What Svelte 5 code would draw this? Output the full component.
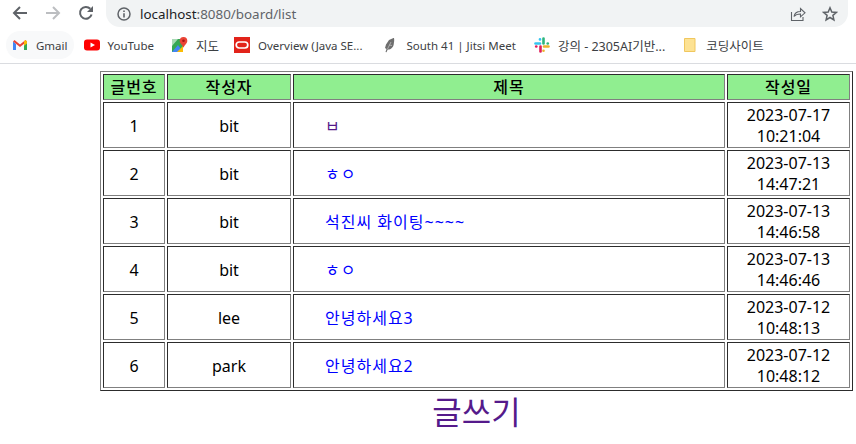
<script>
  const bookmarks = [
    { name: "Gmail", icon: "gmail", gap: 4 },
    { name: "YouTube", icon: "youtube", gap: 6 },
    { name: "지도", icon: "maps", ko: true, gap: 3 },
    { name: "Overview (Java SE...", icon: "oracle", gap: 8 },
    { name: "South 41 | Jitsi Meet", icon: "jitsi", gap: 6 },
    { name: "강의 - 2305AI기반...", icon: "slack", ko: true, gap: 5 },
    { name: "코딩사이트", icon: "folder", ko: true, gap: 0 }
  ];

  const rows = [
    { no: 1, writer: "bit", title: "ㅂ", day: "2023-07-17", time: "10:21:04", visited: true },
    { no: 2, writer: "bit", title: "ㅎㅇ", day: "2023-07-13", time: "14:47:21", visited: false },
    { no: 3, writer: "bit", title: "석진씨 화이팅~~~~", day: "2023-07-13", time: "14:46:58", visited: false },
    { no: 4, writer: "bit", title: "ㅎㅇ", day: "2023-07-13", time: "14:46:46", visited: false },
    { no: 5, writer: "lee", title: "안녕하세요3", day: "2023-07-12", time: "10:48:13", visited: false },
    { no: 6, writer: "park", title: "안녕하세요2", day: "2023-07-12", time: "10:48:12", visited: false }
  ];
</script>

<header class="chrome">
  <div class="toolbar">
    <div class="nav">
      <svg width="16" height="16" viewBox="0 0 16 16"><path d="M15 8H2.500M8 2 2 8l6 6" fill="none" stroke="#5f6368" stroke-width="2"/></svg>
      <svg width="16" height="16" viewBox="0 0 16 16"><path d="M1 8h12.500M8 2l6 6-6 6" fill="none" stroke="#bcbec1" stroke-width="2"/></svg>
      <svg width="16" height="16" viewBox="0 0 16 16"><path d="M13.600 9.500A5.900 5.900 0 1 1 12.300 3.800" fill="none" stroke="#5f6368" stroke-width="2"/><path d="M15 1v6H9z" fill="#5f6368"/></svg>
    </div>
    <div class="omnibox">
      <svg class="info" width="14" height="14" viewBox="0 0 14 14"><circle cx="7" cy="7" r="6" fill="none" stroke="#5f6368" stroke-width="1.500"/><path d="M6.200 3.400h1.600V5H6.200zM6.200 6.200h1.600v4.400H6.200z" fill="#5f6368"/></svg>
      <span class="url"><b>localhost</b>:8080/board/list</span>
      <svg class="share" width="16" height="16" viewBox="0 0 16 16"><path d="M1.500 6v8.500h11.500V11M4 10.500c.6-3.300 3-5 6.500-5V2.500L15 6.800l-4.500 4V8c-2.800 0-5 .6-6.500 2.500z" fill="none" stroke="#5f6368" stroke-width="1.100"/></svg>
      <svg class="star" width="16" height="16" viewBox="0 0 16 16"><path d="m8 1.800 1.800 4.200 4.600.4-3.500 3 1 4.500L8 11.500l-3.900 2.400 1-4.500-3.500-3 4.600-.4z" fill="none" stroke="#5f6368" stroke-width="1.500"/></svg>
    </div>
  </div>
  <nav class="bookmarks">
    {#each bookmarks as b}
      <div class="bookmark" class:hover={b.icon === "gmail"} class:ko={b.ko} style="margin-right: {b.gap}px">
        <svg width="16" height="16" viewBox="0 0 16 16">
          {#if b.icon === "gmail"}
            <path d="M1 4.500v8.500h3V7z" fill="#4285f4"/><path d="M12 7v6h3V4.500z" fill="#34a853"/><path d="M1 4.500 2.500 3 8 7.500 13.500 3 15 4.500 8 10z" fill="#ea4335"/><path d="M12 4.200 13.500 3 15 4.500V6.500L12 8.700z" fill="#fbbc04"/>
          {:else if b.icon === "youtube"}
            <rect y="2.500" width="16" height="11" rx="3" fill="#f00"/><path d="m6.500 5.500 4.500 2.500-4.500 2.500z" fill="#fff"/>
          {:else if b.icon === "maps"}
            <path d="M0 2h11v13H0z" fill="#34a853"/><path d="M0 15 6 8l5 7z" fill="#4285f4"/><path d="M5 15 11 9v6z" fill="#fbbc04"/><path d="M0 2h6L0 9z" fill="#a8dab5"/><path d="M11.500 0a3.800 3.800 0 0 1 3.800 3.800c0 2.500-2.300 3.700-3.800 7-1.500-3.300-3.800-4.500-3.800-7A3.800 3.800 0 0 1 11.500 0z" fill="#ea4335"/><circle cx="11.500" cy="3.800" r="1.300" fill="#a31515"/>
          {:else if b.icon === "oracle"}
            <rect width="16" height="16" fill="#e2231a"/><rect x="2.200" y="5" width="11.600" height="6" rx="3" fill="none" stroke="#fff" stroke-width="1.700"/>
          {:else if b.icon === "jitsi"}
            <path d="M11.500 1 7 3 4 7.500 3 11l1.500 1-1 3 1 .3 1.200-2.800c3 .2 5.500-2 6-5 .3-2.500.8-4 .3-6.500z" fill="#6e6e6e"/><path d="M5.500 12 9 5M7 8l3 .5" stroke="#bbb" stroke-width=".8"/>
          {:else if b.icon === "slack"}
            <path d="M1.500 6.500H6" stroke="#36c5f0" stroke-width="2.600" stroke-linecap="round"/><path d="M6 2.200v.3" stroke="#36c5f0" stroke-width="2.600" stroke-linecap="round"/><path d="M9.500 1.500V6.500" stroke="#2eb67d" stroke-width="2.600" stroke-linecap="round"/><path d="M13.700 6.500h.1" stroke="#2eb67d" stroke-width="2.600" stroke-linecap="round"/><path d="M10 9.500h4.500" stroke="#ecb22e" stroke-width="2.600" stroke-linecap="round"/><path d="M9.500 13.700v.1" stroke="#ecb22e" stroke-width="2.600" stroke-linecap="round"/><path d="M6.500 9.500v5" stroke="#e01e5a" stroke-width="2.600" stroke-linecap="round"/><path d="M2.200 9.500h.1" stroke="#e01e5a" stroke-width="2.600" stroke-linecap="round"/>
          {:else}
            <path d="M2.500 1.500h10.500v13H2.500z" fill="#fde293" stroke="#f0c75e"/>
          {/if}
        </svg>
        <span>{b.name}</span>
      </div>
    {/each}
  </nav>
</header>

<main>
  <table border="1">
    <thead>
      <tr>
        <th class="no">글번호</th>
        <th class="writer">작성자</th>
        <th class="title">제목</th>
        <th class="date">작성일</th>
      </tr>
    </thead>
    <tbody>
      {#each rows as r}
        <tr>
          <td>{r.no}</td>
          <td>{r.writer}</td>
          <td class="subject"><a href="#{r.no}" class:visited={r.visited}>{r.title}</a></td>
          <td>{r.day}<br />{r.time}</td>
        </tr>
      {/each}
    </tbody>
  </table>
  <a class="write" href="#write">글쓰기</a>
</main>

<style>
  :global(body) {
    background: #fff;
    font-family: "Noto Sans", "Noto Sans CJK KR", sans-serif;
  }

  .chrome {
    height: 63px;
    border-bottom: 1px solid #dadce0;
  }

  .toolbar {
    display: flex;
    height: 31px;
    align-items: flex-start;
  }

  .nav {
    display: flex;
    width: 106px;
    box-sizing: border-box;
    gap: 17px;
    padding: 5px 0 0 12px;
  }

  .omnibox {
    display: flex;
    align-items: center;
    width: 742px;
    height: 27px;
    border-radius: 0 0 14px 14px;
    background: #f1f3f4;
    padding-left: 11px;
    box-sizing: border-box;
  }

  .info {
    margin-right: 9px;
  }

  .url {
    flex: 1;
    font-size: 13.400px;
    color: #5f6368;
  }

  .url b {
    font-weight: 400;
    color: #202124;
  }

  .share {
    margin-right: 16px;
  }

  .star {
    margin-right: 10px;
  }

  .bookmarks {
    display: flex;
    align-items: center;
    height: 28px;
    padding-left: 6px;
  }

  .bookmark {
    display: flex;
    align-items: center;
    height: 28px;
    gap: 8px;
    padding: 0 6px;
    border-radius: 14px;
    font-size: 11.500px;
    color: #3c4043;
    white-space: nowrap;
  }

  .bookmark.ko {
    font-size: 12.500px;
  }

  .bookmark.hover {
    background: #f8f9fa;
  }

  main {
    padding: 7px 0 0 100px;
  }

  table {
    width: 753px;
    border-color: #808080;
    color: #000;
    font-size: 16px;
    line-height: 21px;
  }

  th {
    background: lightgreen;
    font-weight: 500;
    padding: 1px;
    height: 22px;
    letter-spacing: 1px;
  }

  td {
    height: 42px;
    padding: 2px 1px 0;
    text-align: center;
  }

  .no {
    width: 58px;
  }

  .writer {
    width: 120px;
  }

  .date {
    width: 119px;
  }

  td.subject {
    text-align: left;
    padding-left: 31px;
    letter-spacing: 1px;
  }

  a {
    text-decoration: none;
    color: #0000ff;
  }

  a.visited {
    color: #551a8b;
  }

  .write {
    display: block;
    width: 753px;
    text-align: center;
    color: #551a8b;
    font-size: 32px;
    line-height: 42px;
  }
</style>
